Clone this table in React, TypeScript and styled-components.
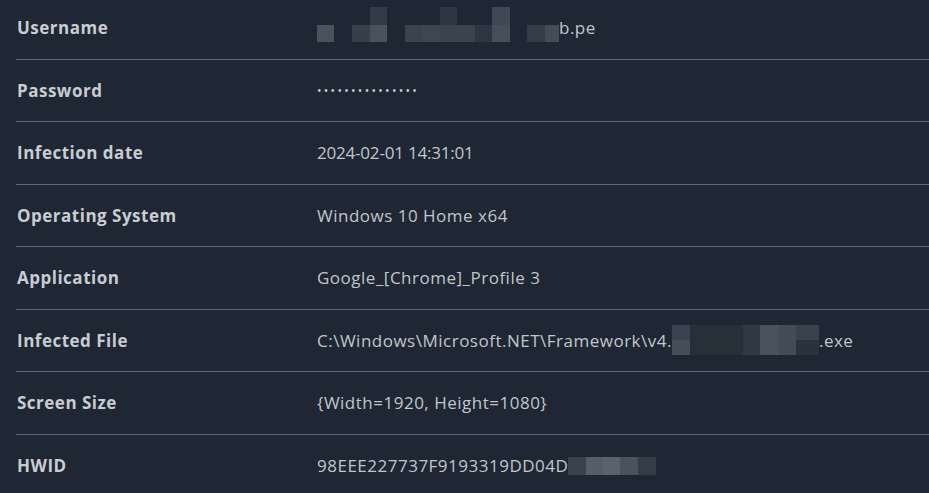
import React from "react";
import styled, { createGlobalStyle } from "styled-components";

const Global = createGlobalStyle`
  html, body { margin: 0; padding: 0; background: #1e2733; }
  body { font-family: "Open Sans", "Liberation Sans", sans-serif; overflow: hidden; }
`;

const Table = styled.div`
  width: 929px;
  height: 493px;
  background: #1e2733;
  margin-top: -3px;
  display: flex;
  flex-direction: column;
  padding-left: 16px;
  box-sizing: border-box;
`;

const Row = styled.div<{ $last?: boolean }>`
  height: 62.5px;
  flex: 0 0 62.5px;
  display: grid;
  grid-template-columns: 301px 1fr;
  align-items: center;
  border-bottom: ${(p) => (p.$last ? "none" : "1px solid #5e6772")};
  box-sizing: border-box;
`;

const Label = styled.div`
  padding-left: 1px;
  font-size: 17px;
  font-weight: 700;
  color: #c9ccd1;
  letter-spacing: 0.5px;
`;

const Value = styled.div<{ $tight?: boolean }>`
  font-size: 17px;
  letter-spacing: ${(p) => (p.$tight ? "-0.2px" : "0.5px")};
  color: #c2c6cc;
  display: flex;
  align-items: center;
  white-space: nowrap;
`;

const Dots = styled.span`
  font-size: 12px;
  letter-spacing: 2.3px;
  color: #c8ccd1;
`;

type Block = [number, number, number, number, string];

const Mosaic: React.FC<{ w: number; h: number; blocks: Block[]; dy?: number }> = ({ w, h, blocks, dy = 0 }) => (
  <svg width={w} height={h} style={{ display: "block", marginTop: dy }}>
    {blocks.map(([x, y, bw, bh, c], i) => (
      <rect key={i} x={x} y={y} width={bw} height={bh} fill={c} />
    ))}
  </svg>
);

const userBlocks: Block[] = [
  [53, 0, 17, 18, "#323b47"],
  [123, 0, 17, 18, "#2e3743"],
  [175, 0, 18, 18, "#3f4854"],
  [0, 18, 17, 17, "#4a525d"],
  [35, 18, 18, 17, "#363f4a"],
  [53, 18, 17, 17, "#4a525c"],
  [88, 18, 17, 17, "#3a434e"],
  [105, 18, 18, 17, "#3d4651"],
  [123, 18, 35, 17, "#3a434e"],
  [158, 18, 17, 17, "#2d3642"],
  [175, 18, 18, 17, "#454e59"],
  [210, 18, 18, 17, "#333c47"],
  [228, 18, 14, 17, "#444c57"],
];

const fileBlocks: Block[] = [
  [0, 0, 18, 15, "#3a4350"],
  [0, 15, 18, 15, "#444d58"],
  [18, 0, 53, 30, "#273039"],
  [71, 0, 17, 30, "#2f3843"],
  [88, 0, 18, 30, "#4a525c"],
  [106, 0, 18, 30, "#444c57"],
  [124, 0, 23, 15, "#39414c"],
  [124, 15, 23, 15, "#2a323d"],
];

const hwidBlocks: Block[] = [
  [0, 0, 18, 18, "#3a424d"],
  [18, 0, 17, 18, "#555d67"],
  [35, 0, 17, 18, "#5a626c"],
  [52, 0, 18, 18, "#4a525c"],
  [70, 0, 18, 18, "#343c47"],
];

export default function App() {
  return (
    <>
      <Global />
      <Table>
        <Row>
          <Label>Username</Label>
          <Value>
            <Mosaic w={242} h={35} blocks={userBlocks} dy={-6} />
            <span>b.pe</span>
          </Value>
        </Row>
        <Row>
          <Label>Password</Label>
          <Value>
            <Dots>•••••••••••••••</Dots>
          </Value>
        </Row>
        <Row>
          <Label>Infection date</Label>
          <Value $tight>2024-02-01 14:31:01</Value>
        </Row>
        <Row>
          <Label>Operating System</Label>
          <Value>Windows 10 Home x64</Value>
        </Row>
        <Row>
          <Label>Application</Label>
          <Value>Google_[Chrome]_Profile 3</Value>
        </Row>
        <Row>
          <Label>Infected File</Label>
          <Value>
            <span>C:\Windows\Microsoft.NET\Framework\v4.</span>
            <Mosaic w={147} h={30} blocks={fileBlocks} />
            <span>.exe</span>
          </Value>
        </Row>
        <Row>
          <Label>Screen Size</Label>
          <Value>{"{Width=1920, Height=1080}"}</Value>
        </Row>
        <Row $last>
          <Label>HWID</Label>
          <Value>
            <span>98EEE227737F9193319DD04D</span>
            <Mosaic w={88} h={18} blocks={hwidBlocks} />
          </Value>
        </Row>
      </Table>
    </>
  );
}
